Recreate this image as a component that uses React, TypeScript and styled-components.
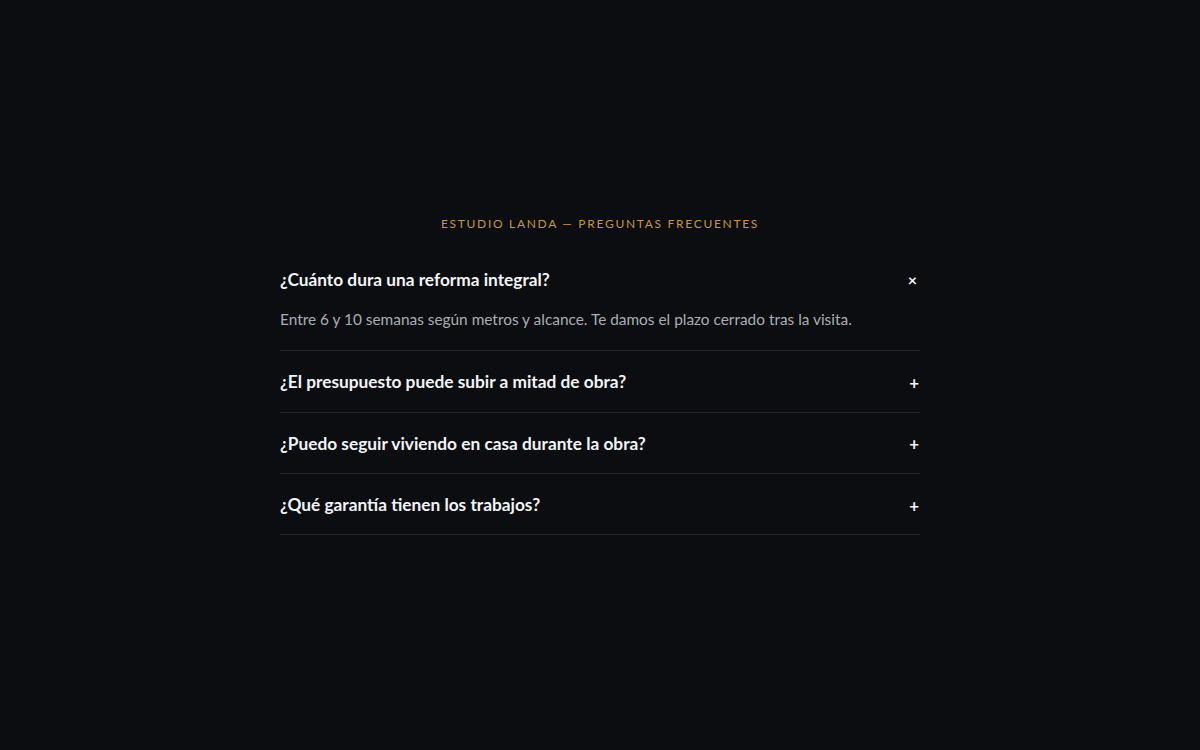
import { useState } from "react";
import styled, { createGlobalStyle } from "styled-components";

interface pregunta {
  id: number;
  titulo: string;
  respuesta: string;
}

const preguntas: pregunta[] = [
  {
    id: 1,
    titulo: "¿Cuánto dura una reforma integral?",
    respuesta: "Entre 6 y 10 semanas según metros y alcance. Te damos el plazo cerrado tras la visita.",
  },
  {
    id: 2,
    titulo: "¿El presupuesto puede subir a mitad de obra?",
    respuesta: "No. El precio que firmas es el que pagas, salvo cambios que tú mismo pidas durante la obra.",
  },
  {
    id: 3,
    titulo: "¿Puedo seguir viviendo en casa durante la obra?",
    respuesta: "Depende de las estancias afectadas. Organizamos las fases para que lo puedas hacer siempre que sea posible.",
  },
  {
    id: 4,
    titulo: "¿Qué garantía tienen los trabajos?",
    respuesta: "Todos nuestros trabajos tienen dos años de garantía por escrito.",
  },
];

function App() {
  const [abierta, setAbierta] = useState<number | null>(1);

  return (
    <>
      <GlobalStyle />
      <Page>
        <Faq>
          <Eyebrow>Estudio Landa — Preguntas frecuentes</Eyebrow>
          <List>
            {preguntas.map((p) => {
              const open = abierta === p.id;
              return (
                <Item key={p.id}>
                  <Question type="button" onClick={() => setAbierta(open ? null : p.id)}>
                    <span>{p.titulo}</span>
                    <Toggle $open={open}>{open ? "×" : "+"}</Toggle>
                  </Question>
                  {open && <Answer>{p.respuesta}</Answer>}
                </Item>
              );
            })}
          </List>
        </Faq>
      </Page>
    </>
  );
}

const GlobalStyle = createGlobalStyle`
  * {
    box-sizing: border-box;
  }

  body {
    margin: 0;
    background-color: #0b0d10;
    font-family: Lato, "Open Sans", sans-serif;
  }
`;

const Page = styled.main`
  min-height: 100vh;
  display: flex;
  align-items: center;
  justify-content: center;
`;

const Faq = styled.section`
  width: 640px;
`;

const Eyebrow = styled.p`
  margin: 0 0 16px;
  text-align: center;
  text-transform: uppercase;
  font-size: 12px;
  line-height: 18px;
  letter-spacing: 1.7px;
  color: #c8963e;
`;

const List = styled.ul`
  list-style: none;
  margin: 0;
  padding: 0;
`;

const Item = styled.li`
  border-bottom: 1px solid #23262b;
`;

const Question = styled.button`
  width: 100%;
  display: flex;
  align-items: center;
  justify-content: space-between;
  padding: 21px 0 19px;
  background: none;
  border: none;
  cursor: pointer;
  text-align: left;
  font-family: inherit;
  font-size: 17.3px;
  line-height: 20.4px;
  font-weight: 700;
  color: #f3f4f6;
`;

const Toggle = styled.span<{ $open: boolean }>`
  font-size: ${(p) => (p.$open ? "16px" : "17px")};
  font-weight: 700;
  line-height: 1;
  margin-right: ${(p) => (p.$open ? "3px" : "1px")};
  color: #f3f4f6;
`;

const Answer = styled.p`
  margin: 0;
  padding: 0 0 20px;
  font-size: 15.4px;
  line-height: 21px;
  color: #a9adb4;
`;

export default App;
